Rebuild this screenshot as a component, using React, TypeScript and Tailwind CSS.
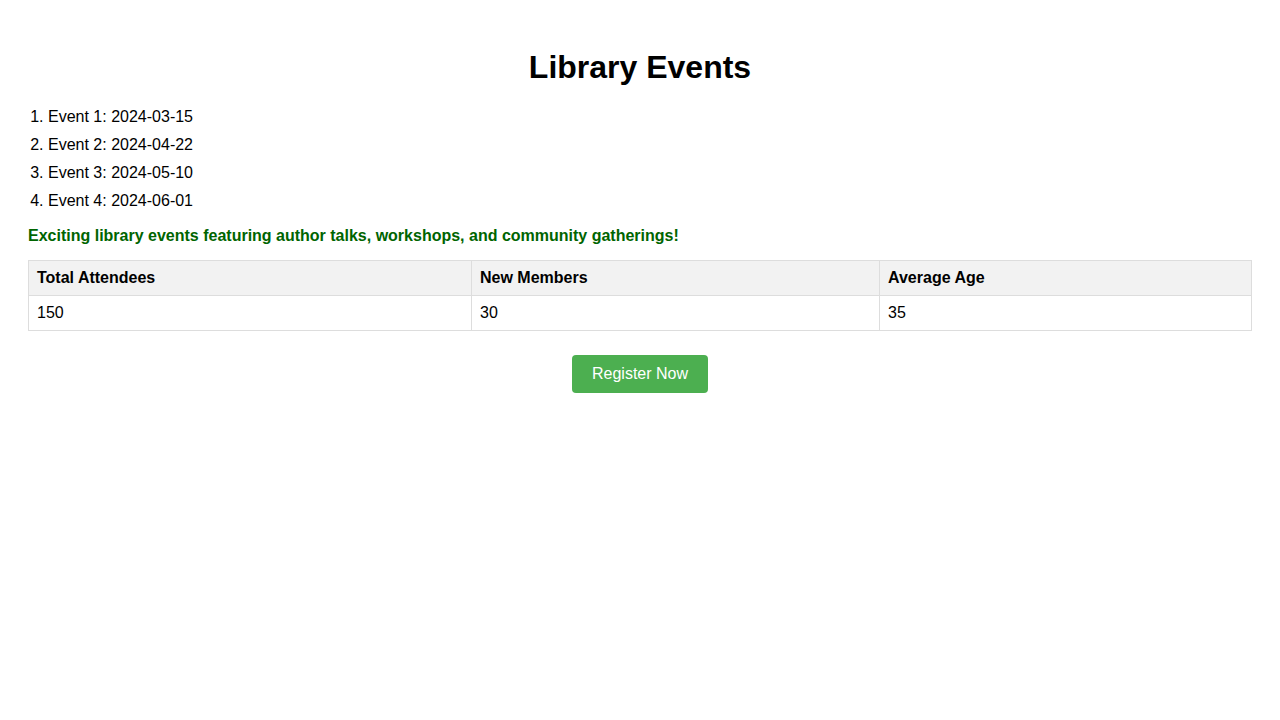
const events = [
  { name: "Event 1", date: "2024-03-15" },
  { name: "Event 2", date: "2024-04-22" },
  { name: "Event 3", date: "2024-05-10" },
  { name: "Event 4", date: "2024-06-01" },
];

const stats = { attendees: 150, newMembers: 30, averageAge: 35 };

export default function App() {
  return (
    <div className="min-h-screen bg-white px-[28px] pt-[49px] font-['Liberation_Sans',Arial,sans-serif] text-[16px] text-black">
      <h1 className="text-center text-[32px] font-bold leading-[37px]">
        Library Events
      </h1>

      <ol className="mt-[22px] list-decimal pl-[20px]">
        {events.map((event, i) => (
          <li
            key={event.name}
            className={`leading-[18px] ${i < events.length - 1 ? "mb-[10px]" : ""}`}
          >
            {event.name}: {event.date}
          </li>
        ))}
      </ol>

      <p className="mt-[17px] font-bold leading-[18px] text-[#006400]">
        Exciting library events featuring author talks, workshops, and
        community gatherings!
      </p>

      <table className="mt-[15px] w-full border-collapse text-left">
        <thead>
          <tr className="bg-[#f2f2f2]">
            <th className="w-[443px] border border-[#dddddd] p-[8px] font-bold leading-[18px]">
              Total Attendees
            </th>
            <th className="w-[408px] border border-[#dddddd] p-[8px] font-bold leading-[18px]">
              New Members
            </th>
            <th className="border border-[#dddddd] p-[8px] font-bold leading-[18px]">
              Average Age
            </th>
          </tr>
        </thead>
        <tbody>
          <tr>
            <td className="border border-[#dddddd] p-[8px] leading-[18px]">
              {stats.attendees}
            </td>
            <td className="border border-[#dddddd] p-[8px] leading-[18px]">
              {stats.newMembers}
            </td>
            <td className="border border-[#dddddd] p-[8px] leading-[18px]">
              {stats.averageAge}
            </td>
          </tr>
        </tbody>
      </table>

      <div className="mt-[24px] flex justify-center">
        <button
          type="button"
          className="rounded-[4px] bg-[#4caf50] px-[20px] py-[10px] text-[16px] leading-[18px] text-white"
        >
          Register Now
        </button>
      </div>
    </div>
  );
}
